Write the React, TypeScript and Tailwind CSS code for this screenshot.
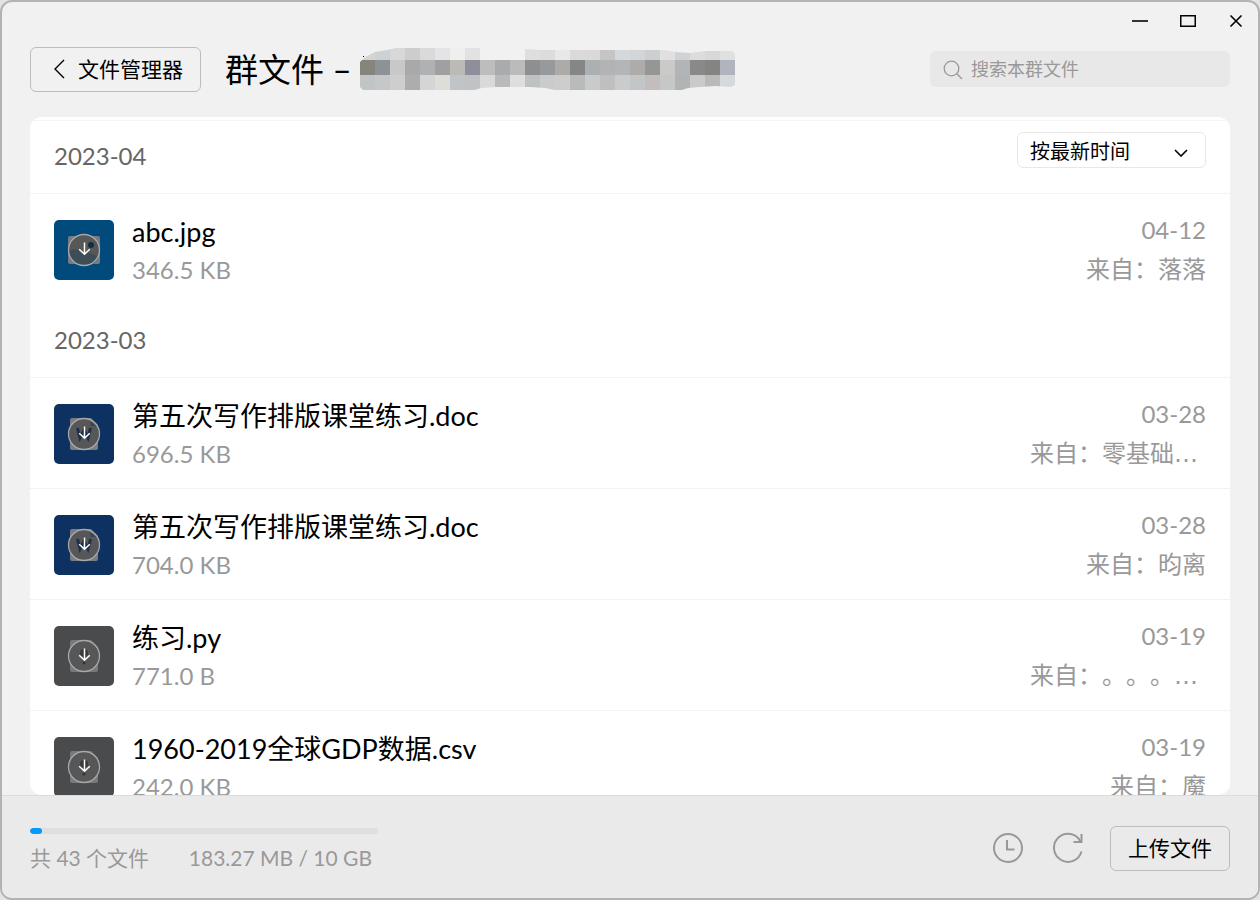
import type { ReactNode } from "react";

type Kind = "image" | "word" | "unknown";

interface FileEntry {
  name: string;
  size: string;
  date: string;
  from: string;
  clipped?: boolean;
  kind: Kind;
}

interface Group {
  month: string;
  files: FileEntry[];
}

const groups: Group[] = [
  {
    month: "2023-04",
    files: [{ name: "abc.jpg", size: "346.5 KB", date: "04-12", from: "落落", kind: "image" }],
  },
  {
    month: "2023-03",
    files: [
      { name: "第五次写作排版课堂练习.doc", size: "696.5 KB", date: "03-28", from: "零基础", clipped: true, kind: "word" },
      { name: "第五次写作排版课堂练习.doc", size: "704.0 KB", date: "03-28", from: "昀离", kind: "word" },
      { name: "练习.py", size: "771.0 B", date: "03-19", from: "。。。", clipped: true, kind: "unknown" },
      { name: "1960-2019全球GDP数据.csv", size: "242.0 KB", date: "03-19", from: "魔", kind: "unknown" },
    ],
  },
];

const mosaic: string[][] = [
  "d4d4d4 cdd1d3 d8d8d8 cdcdcd dadada e4e4e6 efefef e2e2e3 f1f1f1 f1f1f1 f1f1f1 dedede dcdcda e6e8ea dadada d9d9d9 c5c5c5 d5d8da d3d6d8 cccfd0 e0e0e0 d0d2d3 dadcdd d8d8d8 e0e0e0".split(" "),
  "85857c 8c9396 c8c8c8 a9a9aa afb2b3 a0a0a1 bcbab4 8e8f9b bdbdbe aaabac bbbbbb 8d908e 979a9c adaba7 858686 abb1b3 b2b3b4 b3b6b8 adaca8 959796 cccac8 b2b5b7 898989 848482 b0b4bf".split(" "),
  "c2c5c6 c5c7c8 cecece adadae d5d5d6 deded9 c0c4c7 c0c2c4 d9d9d9 b9babb dedede bfc2c2 cbcbcb cdcdcd b9baba c9caca bfbfbf cacbcc c3c6c7 c3bebb c6c8c8 b1b3b4 cacaca bcbab9 d6d9db".split(" "),
];

function GroupNameMosaic() {
  return (
    <svg width="375" height="43" viewBox="0 3 375 43" aria-hidden="true" shapeRendering="crispEdges" className="shrink-0">
      <clipPath id="mosaic-edge">
        <path d="M0 17 L5 12 L15 7 L27 5 L36 3 H120 V15 H165 V4 L180 5 H305 L315 7 L330 8 L345 6 H372 L375 9 V40 L371 42 L355 41 L340 42 L328 43 L322 45 H195 L185 43 L170 42 H135 L122 43 L114 45 H3 L0 42 Z" />
      </clipPath>
      <g clipPath="url(#mosaic-edge)">
        {mosaic.map((row, y) =>
          row.map((c, x) => <rect key={`${x}-${y}`} x={x * 15} y={y * 15} width="15" height="15" fill={`#${c}`} />),
        )}
      </g>
      <rect x="3" y="11" width="1" height="1" fill="#000" />
    </svg>
  );
}

const thumbArt: Record<Kind, { bg: string; art: ReactNode; marks: ReactNode }> = {
  image: {
    bg: "#004b7c",
    art: <rect x="14" y="16" width="32" height="28" rx="2" fill="#777b7f" />,
    marks: (
      <>
        <path d="M15 31 C20 28 25 29 28 34 C33 32 41 33 44 38 C40 46 34 46 30 46 C22 46 16 40 15 31 Z" fill="#3d4e59" />
        <circle cx="37" cy="25" r="3" fill="#0c3045" />
      </>
    ),
  },
  word: {
    bg: "#0d3160",
    art: <path d="M18 14 H37 L44 21 V44 a2 2 0 0 1 -2 2 H18 a2 2 0 0 1 -2 -2 V16 a2 2 0 0 1 2 -2 Z" fill="#7b7d80" />,
    marks: (
      <>
        <path d="M23.500 24 L26 34 L30 26 L34 34 L36.500 24" fill="none" stroke="#1d2f4b" strokeWidth="3" />
        <path d="M36 17 L42 22 H37 Z" fill="#34465e" />
      </>
    ),
  },
  unknown: {
    bg: "#494b4d",
    art: <path d="M18 14 H37 L44 21 V44 a2 2 0 0 1 -2 2 H18 a2 2 0 0 1 -2 -2 V16 a2 2 0 0 1 2 -2 Z" fill="#77797b" />,
    marks: (
      <>
        <circle cx="30" cy="27" r="4" fill="#3a3b3c" />
        <circle cx="30" cy="37" r="1.500" fill="#333435" />
      </>
    ),
  },
};

function Thumb({ kind }: { kind: Kind }) {
  const { bg, art, marks } = thumbArt[kind];
  return (
    <svg width="60" height="60" viewBox="0 0 60 60" aria-hidden="true">
      <rect width="60" height="60" rx="5" fill={bg} />
      {art}
      <circle cx="30" cy="30" r="15" fill="#575757" />
      {marks}
      <circle cx="30" cy="30" r="15.500" fill="none" stroke="#a6a8aa" strokeWidth="1.300" />
      <path d="M30.500 22.500 V34 M25.200 29.200 L30.500 34.300 L35.800 29.200" fill="none" stroke="#fff" strokeWidth="1.500" />
    </svg>
  );
}

function FileRow({ file }: { file: FileEntry }) {
  return (
    <li className="flex h-[111px] gap-[18px] border-b border-[#f3f3f3] px-6 last:border-transparent">
      <button type="button" aria-label={`下载 ${file.name}`} className="mt-[26px] h-[60px] w-[60px] shrink-0">
        <Thumb kind={file.kind} />
      </button>
      <div className="min-w-0 flex-1 pt-5">
        <p className="truncate text-[27px] leading-9 text-black">{file.name}</p>
        <p className="text-2xl leading-10 text-[#999]">{file.size}</p>
      </div>
      <div className="pt-4 text-right text-2xl leading-[39px] text-[#999]">
        <p>{file.date}</p>
        <p className={file.clipped ? "pr-2" : ""}>
          来自：{file.from}
          {file.clipped && <span className="font-['DejaVu_Sans',sans-serif] leading-none">…</span>}
        </p>
      </div>
    </li>
  );
}

export default function App() {
  return (
    <div
      lang="zh-CN"
      className="h-screen bg-[#e4e4e4] font-['Lato','Noto_Sans_CJK_SC',sans-serif] [text-spacing-trim:space-all]"
    >
      <div className="flex h-full flex-col overflow-hidden rounded-xl border-2 border-[#b3b3b3] bg-[#f1f1f1]">
        <div className="flex h-[45px] shrink-0 justify-end gap-6 px-2.5 pt-[7px]">
          <button type="button" aria-label="最小化" className="h-6 w-6">
            <svg width="24" height="24" viewBox="0 0 24 24">
              <path d="M4 12 H20" stroke="#333" strokeWidth="2" />
            </svg>
          </button>
          <button type="button" aria-label="最大化" className="h-6 w-6">
            <svg width="24" height="24" viewBox="0 0 24 24">
              <rect x="4.750" y="6.750" width="14.500" height="10.500" fill="none" stroke="#000" strokeWidth="1.500" />
            </svg>
          </button>
          <button type="button" aria-label="关闭" className="h-6 w-6">
            <svg width="24" height="24" viewBox="0 0 24 24">
              <path d="M6.500 6.500 L17.500 17.500 M17.500 6.500 L6.500 17.500" stroke="#000" strokeWidth="1.600" />
            </svg>
          </button>
        </div>

        <header className="flex h-[45px] shrink-0 items-center px-7">
          <button
            type="button"
            className="flex h-[45px] shrink-0 items-center gap-2.5 rounded-md border border-[#bdbdbd] pr-[17px] pb-0.5 pl-[19px] text-[21px] text-black"
          >
            <svg width="18" height="20" viewBox="0 0 18 20" aria-hidden="true">
              <path d="M14 1 L5 10 L14 19" fill="none" stroke="#000" strokeWidth="1.400" />
            </svg>
            文件管理器
          </button>
          <div className="ml-6 flex items-center gap-2">
            <h1 className="pb-0.5 text-[33px] leading-10 whitespace-nowrap text-black">群文件 –</h1>
            <GroupNameMosaic />
          </div>
          <label className="mb-px ml-auto flex h-9 w-[300px] items-center gap-2 rounded-md bg-[#e8e8e8] px-3">
            <svg width="21" height="21" viewBox="0 0 21 21" aria-hidden="true" className="shrink-0">
              <circle cx="9.500" cy="9.500" r="7.300" fill="none" stroke="#999" strokeWidth="1.300" />
              <path d="M14.800 14.800 L20 20" stroke="#999" strokeWidth="1.300" />
            </svg>
            <input
              type="search"
              aria-label="搜索本群文件"
              placeholder="搜索本群文件"
              className="min-w-0 flex-1 bg-transparent text-lg text-black outline-none placeholder:text-[#999]"
            />
          </label>
        </header>

        <main className="mx-7 mt-[25px] min-h-0 flex-1 overflow-y-auto rounded-xl bg-white pt-[3px] [scrollbar-width:none]">
          <div className="border-t border-[#f5f5f5]">
            {groups.map((g, i) => (
              <section key={g.month}>
                <div className="flex h-[73px] justify-between border-b border-[#f3f3f3] px-6">
                  <h2 className="self-center pb-0.5 text-2xl text-[#666]">{g.month}</h2>
                  {i === 0 && (
                    <div className="relative mt-[11px] h-9 w-[189px]">
                      <select
                        aria-label="排序方式"
                        className="h-full w-full appearance-none rounded-md border border-[#e8e8e8] bg-white pt-0.5 pl-3 text-xl text-black"
                      >
                        <option>按最新时间</option>
                      </select>
                      <svg
                        width="14"
                        height="8"
                        viewBox="0 0 14 8"
                        aria-hidden="true"
                        className="pointer-events-none absolute top-[17px] right-[18px]"
                      >
                        <path d="M1 1 L7 7 L13 1" fill="none" stroke="#000" strokeWidth="1.600" />
                      </svg>
                    </div>
                  )}
                </div>
                <ul>
                  {g.files.map((f, n) => (
                    <FileRow key={n} file={f} />
                  ))}
                </ul>
              </section>
            ))}
          </div>
        </main>

        <footer className="flex h-[103px] shrink-0 items-start border-t border-[#dcdcdc] bg-[#eaeaea] px-7">
          <div className="w-[348px] pt-8">
            <div
              role="progressbar"
              aria-label="已用空间"
              aria-valuemin={0}
              aria-valuemax={10240}
              aria-valuenow={183}
              className="h-1.5 overflow-hidden rounded-full bg-[#dfdfdf]"
            >
              <div className="h-full w-3 rounded-full bg-[#0099ff]" />
            </div>
            <div className="mt-2 flex justify-between pr-1.5 text-[21px] leading-8 whitespace-nowrap text-[#999]">
              <span>共 43 个文件</span>
              <span>183.27 MB / 10 GB</span>
            </div>
          </div>
          <div className="ml-auto flex items-center gap-[26px] pt-[30px]">
            <div className="flex gap-7 pb-0.5">
              <button type="button" aria-label="传输记录" className="h-8 w-8">
                <svg width="32" height="32" viewBox="0 0 32 32">
                  <circle cx="16" cy="16" r="14" fill="none" stroke="#999" strokeWidth="2" />
                  <path d="M15 8 V17.500 H22.500" fill="none" stroke="#999" strokeWidth="2" />
                </svg>
              </button>
              <button type="button" aria-label="刷新" className="h-8 w-8">
                <svg width="32" height="32" viewBox="0 0 32 32">
                  <path d="M29.500 19.500 A14 14 0 1 1 28.500 9.500" fill="none" stroke="#999" strokeWidth="2" />
                  <path d="M29.500 2 V10 H21.500" fill="none" stroke="#999" strokeWidth="2" />
                </svg>
              </button>
            </div>
            <button
              type="button"
              className="h-[45px] w-[120px] rounded-md border border-[#bdbdbd] pb-0.5 text-[21px] text-black"
            >
              上传文件
            </button>
          </div>
        </footer>
      </div>
    </div>
  );
}
